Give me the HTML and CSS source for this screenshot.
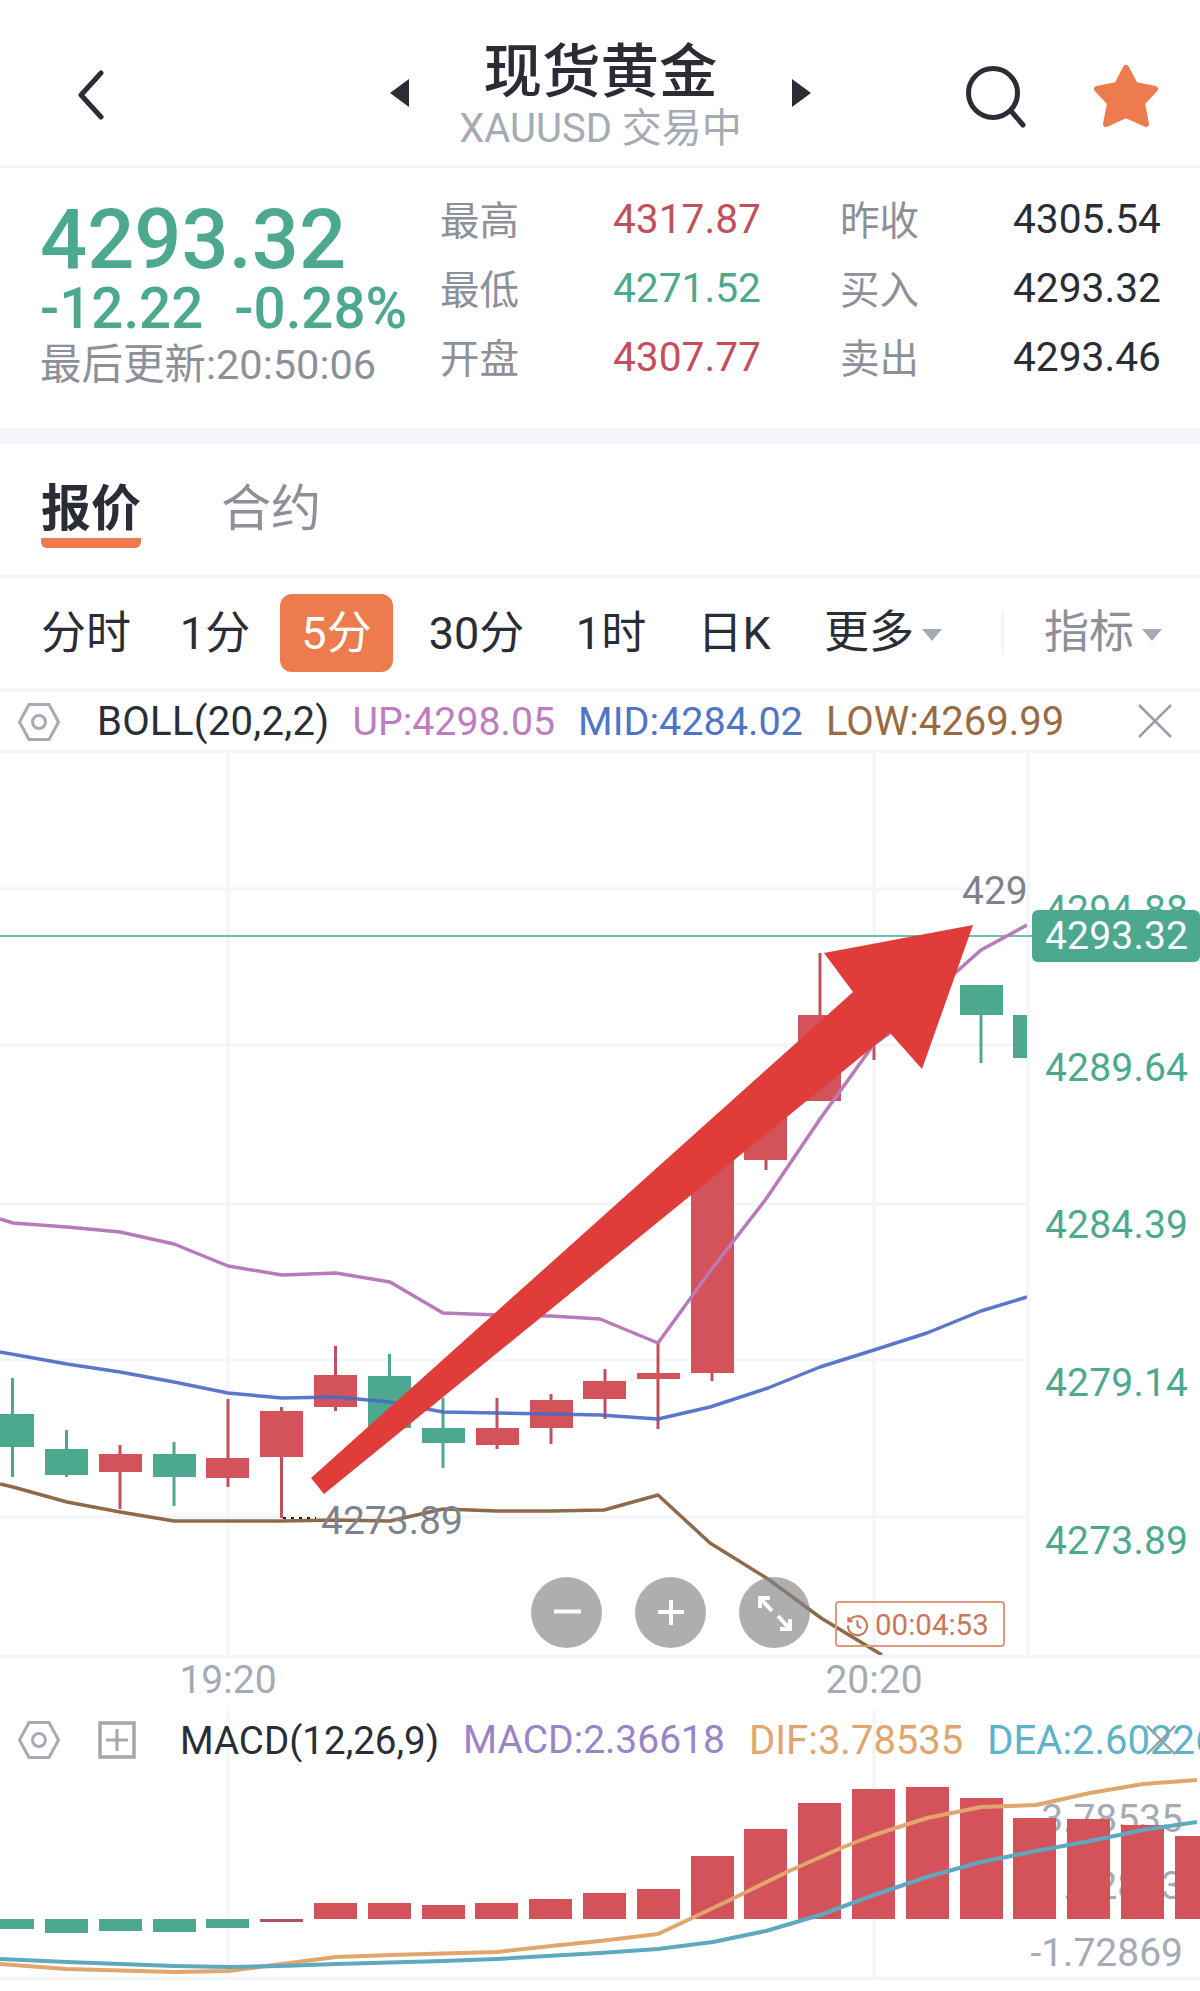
FILE: index.html
```html
<!DOCTYPE html>
<html lang="zh-CN">
<head>
    <meta charset="UTF-8">
    <title>现货黄金 XAUUSD</title>
    <link rel="stylesheet" href="styles.css">
</head>
<body>
    <header class="topbar">
        <svg class="back" viewBox="0 0 30 50"><path d="M25 3 L5 25 L25 47"/></svg>
        <div class="title-wrap">
            <svg class="tri" viewBox="0 0 19 28"><path d="M19 0 V28 L0 14 Z"/></svg>
            <div class="title-text">
                <div class="name">现货黄金</div>
                <div class="sub">XAUUSD 交易中</div>
            </div>
            <svg class="tri" viewBox="0 0 19 28"><path d="M0 0 V28 L19 14 Z"/></svg>
        </div>
        <svg class="search" viewBox="0 0 62 64"><circle cx="28" cy="28" r="24.5"/><path d="M46 46 L58 60"/></svg>
        <svg class="star" viewBox="0 0 66 64"><path d="M33 4 L42 21 L62 25 L49 39 L53 60 L33 51 L13 60 L17 39 L4 25 L24 21 Z"/></svg>
    </header>

    <section class="quote">
        <div class="quote-main">
            <div class="price">4293.32</div>
            <div class="change"><span>-12.22</span><span>-0.28%</span></div>
            <div class="updated">最后更新:20:50:06</div>
        </div>
        <div class="quote-grid">
            <span class="lbl">最高</span><span class="val up">4317.87</span><span class="lbl">昨收</span><span class="val">4305.54</span>
            <span class="lbl">最低</span><span class="val down">4271.52</span><span class="lbl">买入</span><span class="val">4293.32</span>
            <span class="lbl">开盘</span><span class="val up">4307.77</span><span class="lbl">卖出</span><span class="val">4293.46</span>
        </div>
    </section>

    <nav class="tabs">
        <div class="tab active">报价</div>
        <div class="tab">合约</div>
    </nav>

    <div class="periods">
        <span class="period">分时</span>
        <span class="period">1分</span>
        <span class="period current">5分</span>
        <span class="period">30分</span>
        <span class="period">1时</span>
        <span class="period">日K</span>
        <span class="period more">更多<i class="caret"></i></span>
        <span class="divider"></span>
        <span class="period more muted">指标<i class="caret"></i></span>
    </div>

    <div class="indicator-bar">
        <svg class="hex" viewBox="0 0 42 38"><path d="M1.5 19 L11 1.5 H31 L40.5 19 L31 36.5 H11 Z"/><circle cx="21" cy="19" r="6.5"/></svg>
        <span class="ind-name">BOLL(20,2,2)</span>
        <span class="c-up">UP:4298.05</span>
        <span class="c-mid">MID:4284.02</span>
        <span class="c-low">LOW:4269.99</span>
        <svg class="close" viewBox="0 0 34 34"><path d="M1 1 L33 33 M33 1 L1 33"/></svg>
    </div>

    <div class="kline">
        <svg class="plot" viewBox="0 753 1200 902">
            <defs><clipPath id="plotClip"><rect x="0" y="753" width="1027" height="902"/></clipPath></defs>
            <!-- grid -->
            <path class="grid" d="M228 753 V1655 M874 753 V1655 M1028 753 V1655 M0 889 H1028 M0 1045 H1028 M0 1204 H1028 M0 1360 H1028 M0 1517 H1028"/>
            <!-- right axis -->
            <text class="axis" x="1045" y="923">4294.88</text>
            <text class="axis" x="1045" y="1081">4289.64</text>
            <text class="axis" x="1045" y="1238">4284.39</text>
            <text class="axis" x="1045" y="1396">4279.14</text>
            <text class="axis" x="1045" y="1554">4273.89</text>
            <line class="price-line" x1="0" y1="936" x2="1032" y2="936"/>

            <g clip-path="url(#plotClip)">
                <!-- wicks -->
                <path class="wick-g" d="M12.5 1378 V1477 M66.5 1430 V1477 M174 1442 V1506 M389.5 1354 V1428 M443 1398 V1468 M981 1015 V1063"/>
                <path class="wick-r" d="M120 1445 V1509 M228 1399 V1487 M281.5 1407 V1518 M335.5 1346 V1411 M497 1398 V1449 M551 1394 V1444 M605 1369 V1419 M658 1342 V1429 M712 1373 V1381 M766 1160 V1170 M820 953 V1015 M874 1040 V1060"/>
                <!-- bodies -->
                <path class="body-g" d="M-9 1414 H34 V1447 H-9 Z M45 1449 H88 V1475 H45 Z M153 1454 H196 V1477 H153 Z M368 1376 H411 V1428 H368 Z M422 1428 H465 V1443 H422 Z M960 985 H1003 V1015 H960 Z M1013 1015 H1056 V1058 H1013 Z"/>
                <path class="body-r" d="M99 1454 H142 V1472 H99 Z M206 1458 H249 V1478 H206 Z M260 1411 H303 V1457 H260 Z M314 1375 H357 V1407 H314 Z M476 1428 H519 V1445 H476 Z M530 1400 H573 V1428 H530 Z M583 1381 H626 V1399 H583 Z M637 1373 H680 V1379 H637 Z M691 1150 H734 V1373 H691 Z M744 1100 H787 V1160 H744 Z M798 1015 H841 V1101 H798 Z"/>
                <!-- BOLL -->
                <polyline class="band c-band-up" points="0,1219 13,1223 67,1227 120,1232 174,1244 228,1266 282,1275 336,1273 390,1282 443,1313 497,1315 551,1316 600,1319 658,1343 711,1270 766,1199 820,1119 874,1044 891,1032 927,998 981,950 1027,925"/>
                <polyline class="band c-band-mid" points="0,1352 67,1364 120,1372 174,1382 228,1393 282,1398 336,1397 390,1402 443,1412 497,1413 551,1414 600,1415 658,1419 710,1407 768,1388 820,1367 874,1350 927,1333 981,1311 1027,1297"/>
                <polyline class="band c-band-low" points="0,1484 13,1487 67,1502 120,1512 174,1521 228,1521 282,1521 336,1520 390,1521 443,1509 497,1511 551,1511 604,1510 658,1495 710,1543 768,1579 821,1618 882,1655"/>
                <text class="mark" x="962" y="904">429</text>
            </g>
            <path class="dots" d="M283 1518 H316"/>
            <text class="mark" x="321" y="1534">4273.89</text>
            <!-- latest price tag -->
            <rect class="tag" x="1032" y="910" width="168" height="52" rx="6"/>
            <text class="tag-text" x="1045" y="949">4293.32</text>
            <!-- drawn arrow -->
            <polygon class="arrow" points="973,925 824,953 853,992 311,1478 324,1494 890,1033 922,1069"/>
        </svg>
        <div class="zoom-btns">
            <span class="round-btn"><svg viewBox="0 0 71 71"><path d="M23 34.5 H50"/></svg></span>
            <span class="round-btn"><svg viewBox="0 0 71 71"><path d="M23 35 H49 M36 23 V48"/></svg></span>
            <span class="round-btn"><svg viewBox="0 0 71 71"><path d="M21 31 V21 H31 M21 21 L33 34 M51 42 V52 H41 M51 52 L39 39"/></svg></span>
        </div>
        <div class="countdown">
            <svg viewBox="0 0 24 24"><path d="M3.5 7 A10 10 0 1 1 2 12 M2.5 3 V7.5 H7 M12 6.5 V12.5 L16 15"/></svg>
            <span>00:04:53</span>
        </div>
    </div>

    <div class="time-axis">
        <span>19:20</span>
        <span class="t2">20:20</span>
    </div>

    <div class="macd">
        <svg class="plot" viewBox="0 1710 1200 267">
            <path class="grid" d="M228 1710 V1977 M874 1710 V1977"/>
            <text class="macd-axis" x="1183" y="1832">3.78535</text>
            <text class="macd-axis" x="1183" y="1899">1.02833</text>
            <text class="macd-axis" x="1183" y="1966">-1.72869</text>
            <path class="body-g" d="M-9 1919 H34 V1929 H-9 Z M45 1919 H88 V1933 H45 Z M99 1919 H142 V1931 H99 Z M153 1919 H196 V1932 H153 Z M206 1919 H249 V1928 H206 Z"/>
            <rect class="bar-small" x="260" y="1919" width="43" height="3"/>
            <path class="body-r" d="M314 1903 H357 V1919 H314 Z M368 1903 H411 V1919 H368 Z M422 1905 H465 V1919 H422 Z M475 1903 H518 V1919 H475 Z M529 1899 H572 V1919 H529 Z M583 1893 H626 V1919 H583 Z M637 1889 H680 V1919 H637 Z M691 1856 H734 V1919 H691 Z M744 1829 H787 V1919 H744 Z M798 1803 H841 V1919 H798 Z M852 1789 H895 V1919 H852 Z M906 1787 H949 V1919 H906 Z M960 1798 H1003 V1919 H960 Z M1013 1818 H1056 V1919 H1013 Z M1067 1819 H1110 V1919 H1067 Z M1121 1825 H1164 V1919 H1121 Z M1175 1836 H1218 V1919 H1175 Z"/>
            <polyline class="band c-dif" points="0,1964 67,1969 174,1972 228,1971 336,1957 390,1955 497,1952 551,1946 600,1941 658,1934 692,1918 734,1898 787,1872 841,1848 874,1835 927,1818 981,1807 1036,1805 1090,1793 1143,1784 1197,1780"/>
            <polyline class="band c-dea" points="0,1959 67,1962 174,1966 228,1967 282,1966 336,1964 443,1961 497,1959 600,1953 658,1949 713,1942 766,1931 820,1915 874,1895 927,1877 981,1862 1036,1851 1090,1841 1143,1830 1197,1822"/>
        </svg>
        <div class="macd-head">
            <svg class="hex" viewBox="0 0 42 38"><path d="M1.5 19 L11 1.5 H31 L40.5 19 L31 36.5 H11 Z"/><circle cx="21" cy="19" r="6.5"/></svg>
            <svg class="plus-box" viewBox="0 0 38 38"><path d="M2 2 H36 V36 H2 Z"/><path class="thin" d="M8 19 H30 M19 8 V30"/></svg>
            <span class="ind-name">MACD(12,26,9)</span>
            <span class="c-macd">MACD:2.36618</span>
            <span class="c-difT">DIF:3.78535</span>
            <span class="c-deaT">DEA:2.60226</span>
        </div>
        <svg class="close macd-close" viewBox="0 0 34 34"><path d="M1 1 L33 33 M33 1 L1 33"/></svg>
    </div>
    <div class="foot"></div>
</body>
</html>
```

FILE: styles.css
```css
:root {
    --ink: #2a2d35;
    --muted: #8d9099;
    --faint: #a6aab4;
    --line: #f4f5f9;
    --orange: #ee7b4d;
    --green: #4ca98f;
    --red: #d4525a;
}

* {
    margin: 0;
    padding: 0;
    box-sizing: border-box;
}

body {
    width: 1200px;
    height: 1991px;
    overflow: hidden;
    background: #fff;
    color: var(--ink);
    font-family: Roboto, "Noto Sans CJK SC", sans-serif;
}

/* top bar */
.topbar {
    height: 168px;
    border-bottom: 3px solid var(--line);
    display: flex;
    align-items: flex-start;
}

.back {
    width: 30px;
    height: 50px;
    margin: 70px 0 0 76px;
    fill: none;
    stroke: var(--ink);
    stroke-width: 5;
    stroke-linecap: round;
    stroke-linejoin: round;
}

.title-wrap {
    width: 421px;
    margin-left: 284px;
    display: flex;
    justify-content: space-between;
    align-items: center;
    height: 186px;
    flex: none;
}

.tri {
    width: 19px;
    height: 28px;
    fill: var(--ink);
}

.title-text {
    text-align: center;
    white-space: nowrap;
}

.name {
    font-size: 58.5px;
    line-height: 70px;
    font-weight: 500;
    margin-top: 2px;
}

.sub {
    font-size: 40px;
    line-height: 44px;
    color: var(--faint);
}

.search {
    width: 62px;
    height: 64px;
    margin: 65px 0 0 154px;
    fill: none;
    stroke: var(--ink);
    stroke-width: 5;
    stroke-linecap: round;
    flex: none;
}

.star {
    width: 66px;
    height: 64px;
    margin: 64px 0 0 66px;
    fill: var(--orange);
    stroke: var(--orange);
    stroke-width: 6;
    stroke-linejoin: round;
    flex: none;
}

/* quote */
.quote {
    height: 276px;
    border-bottom: 16px solid var(--line);
    padding-left: 40px;
    display: flex;
}

.quote-main {
    width: 400px;
    padding-top: 27px;
}

.price {
    font-size: 83px;
    line-height: 90px;
    font-weight: 500;
    color: var(--green);
}

.change {
    display: flex;
    gap: 31px;
    font-size: 56.5px;
    line-height: 56px;
    color: var(--green);
    font-weight: 500;
    margin-top: -4px;
}

.updated {
    font-size: 41.5px;
    line-height: 50px;
    color: var(--muted);
    margin-top: 3px;
}

.quote-grid {
    display: grid;
    grid-template-columns: 173px 227px 173px 147px;
    grid-auto-rows: 69px;
    padding-top: 16px;
    align-items: center;
}

.lbl {
    font-size: 39.5px;
    line-height: 69px;
    color: var(--muted);
    padding-top: 5px;
}

.val {
    font-size: 40.7px;
    color: var(--ink);
}

.val.up {
    color: #c2505b;
}

.val.down {
    color: var(--green);
}

/* tabs */
.tabs {
    height: 134px;
    border-bottom: 3px solid var(--line);
    padding-left: 41px;
    display: flex;
    gap: 80px;
}

.tab {
    font-size: 50px;
    line-height: 60px;
    color: var(--muted);
    padding-top: 35px;
    height: 104px;
}

.tab.active {
    color: var(--ink);
    font-weight: 700;
    border-bottom: 10px solid var(--orange);
    border-radius: 0 0 6px 6px;
}

/* periods */
.periods {
    height: 114px;
    border-bottom: 4px solid var(--line);
    padding-left: 22px;
    display: grid;
    grid-template-columns: 128px 130px 113px 167px 102px 144px 195px 3px auto;
    align-items: center;
    justify-items: center;
    font-size: 45px;
}

.period {
    height: 78px;
    line-height: 80px;
}

.period.current {
    width: 113px;
    text-align: center;
    background: var(--orange);
    color: #fff;
    border-radius: 12px;
}

.more {
    display: flex;
    align-items: center;
    gap: 8px;
    justify-self: start;
    margin-left: 18px;
}

.period.muted {
    color: var(--muted);
    margin-left: 40px;
}

.caret {
    width: 0;
    height: 0;
    border-left: 10px solid transparent;
    border-right: 10px solid transparent;
    border-top: 12px solid var(--faint);
    margin-top: 4px;
}

.divider {
    width: 3px;
    height: 44px;
    background: var(--line);
}

/* indicator rows */
.indicator-bar {
    height: 61px;
    border-bottom: 3px solid var(--line);
    display: flex;
    align-items: center;
    padding: 1px 0 0 18px;
    font-size: 40px;
    gap: 23px;
    position: relative;
    white-space: nowrap;
}

.hex {
    width: 42px;
    height: 38px;
    fill: none;
    stroke: var(--faint);
    stroke-width: 3;
    flex: none;
}

.ind-name {
    color: var(--ink);
}

.indicator-bar .ind-name {
    margin-left: 14px;
    letter-spacing: 0.3px;
}

.indicator-bar .c-up { font-size: 39.3px; }
.indicator-bar .c-mid { font-size: 39.6px; }

.c-up { color: #c07dbe; }
.c-mid { color: #4f74c8; }
.c-low { color: #9a6b43; }
.c-macd { color: #9a84c8; }
.c-difT { color: #e0a66e; }
.c-deaT { color: #5fb3c6; }

.close {
    position: absolute;
    width: 34px;
    height: 34px;
    right: 28px;
    top: 12px;
    fill: none;
    stroke: #9a9ea8;
    stroke-width: 2.5;
}

/* charts */
.kline {
    height: 902px;
    position: relative;
}

.plot {
    display: block;
    width: 1200px;
    height: 100%;
}

.grid {
    fill: none;
    stroke: var(--line);
    stroke-width: 3;
}

.axis {
    font-size: 39px;
    fill: var(--green);
    letter-spacing: 0.2px;
}

.price-line {
    stroke: #6dbfa8;
    stroke-width: 2;
}

.wick-g { fill: none; stroke: var(--green); stroke-width: 3; }
.wick-r { fill: none; stroke: #c2505b; stroke-width: 3; }
.body-g { fill: var(--green); }
.body-r { fill: var(--red); }
.bar-small { fill: #a8565e; }

.band {
    fill: none;
    stroke-width: 3.5;
    stroke-linejoin: round;
}

.c-band-up { stroke: #b87ab8; }
.c-band-mid { stroke: rgba(72, 104, 196, 0.9); }
.c-band-low { stroke: #8f6a48; }
.c-dif { stroke: #e0a66e; stroke-width: 4; }
.c-dea { stroke: #5fa9c0; stroke-width: 4; }

.mark {
    font-size: 39px;
    fill: #7e828e;
}

.dots {
    stroke: #222;
    stroke-width: 2;
    stroke-dasharray: 3 5;
}

.tag { fill: var(--green); }

.tag-text {
    font-size: 39px;
    fill: #fff;
    letter-spacing: 0.2px;
}

.arrow { fill: #e03c3a; }

.zoom-btns {
    position: absolute;
    left: 531px;
    top: 824px;
    display: flex;
    gap: 33px;
}

.round-btn {
    width: 71px;
    height: 71px;
    border-radius: 50%;
    background: rgba(130, 130, 130, 0.65);
}

.round-btn svg {
    display: block;
    width: 71px;
    height: 71px;
    fill: none;
    stroke: #fff;
    stroke-width: 4;
}

.countdown {
    position: absolute;
    left: 835px;
    top: 848px;
    width: 170px;
    height: 46px;
    border: 2px solid #dd9a7c;
    border-radius: 4px;
    display: flex;
    align-items: center;
    gap: 6px;
    padding: 2px 0 0 9px;
    font-size: 29.5px;
    color: #c9785a;
}

.countdown svg {
    width: 23px;
    height: 23px;
    fill: none;
    stroke: #c9785a;
    stroke-width: 2.2;
    flex: none;
}

.time-axis {
    height: 55px;
    border-top: 3px solid var(--line);
    font-size: 39px;
    line-height: 44px;
    color: var(--faint);
    display: flex;
    padding-left: 128px;
}

.time-axis span {
    width: 200px;
    text-align: center;
}

.time-axis .t2 {
    margin-left: 446px;
}

.macd {
    height: 267px;
    position: relative;
}

.macd-axis {
    font-size: 39px;
    fill: var(--faint);
    text-anchor: end;
}

.macd-head {
    position: absolute;
    left: 18px;
    top: 8px;
    width: 1182px;
    height: 44px;
    display: flex;
    align-items: center;
    gap: 24px;
    font-size: 39px;
    white-space: nowrap;
    overflow: hidden;
}

.macd-head .ind-name {
    font-size: 38.5px;
}

.macd-head .c-difT,
.macd-head .c-deaT {
    font-size: 40px;
}

.plus-box {
    width: 38px;
    height: 38px;
    margin: 0 20px 0 14px;
    fill: none;
    stroke: #a4a7b0;
    stroke-width: 3.5;
    flex: none;
}

.plus-box .thin {
    stroke-width: 3;
}

.macd-close {
    width: 30px;
    height: 32px;
    right: 24px;
    top: 14px;
}

.foot {
    height: 14px;
    border-top: 3px solid var(--line);
}
```
